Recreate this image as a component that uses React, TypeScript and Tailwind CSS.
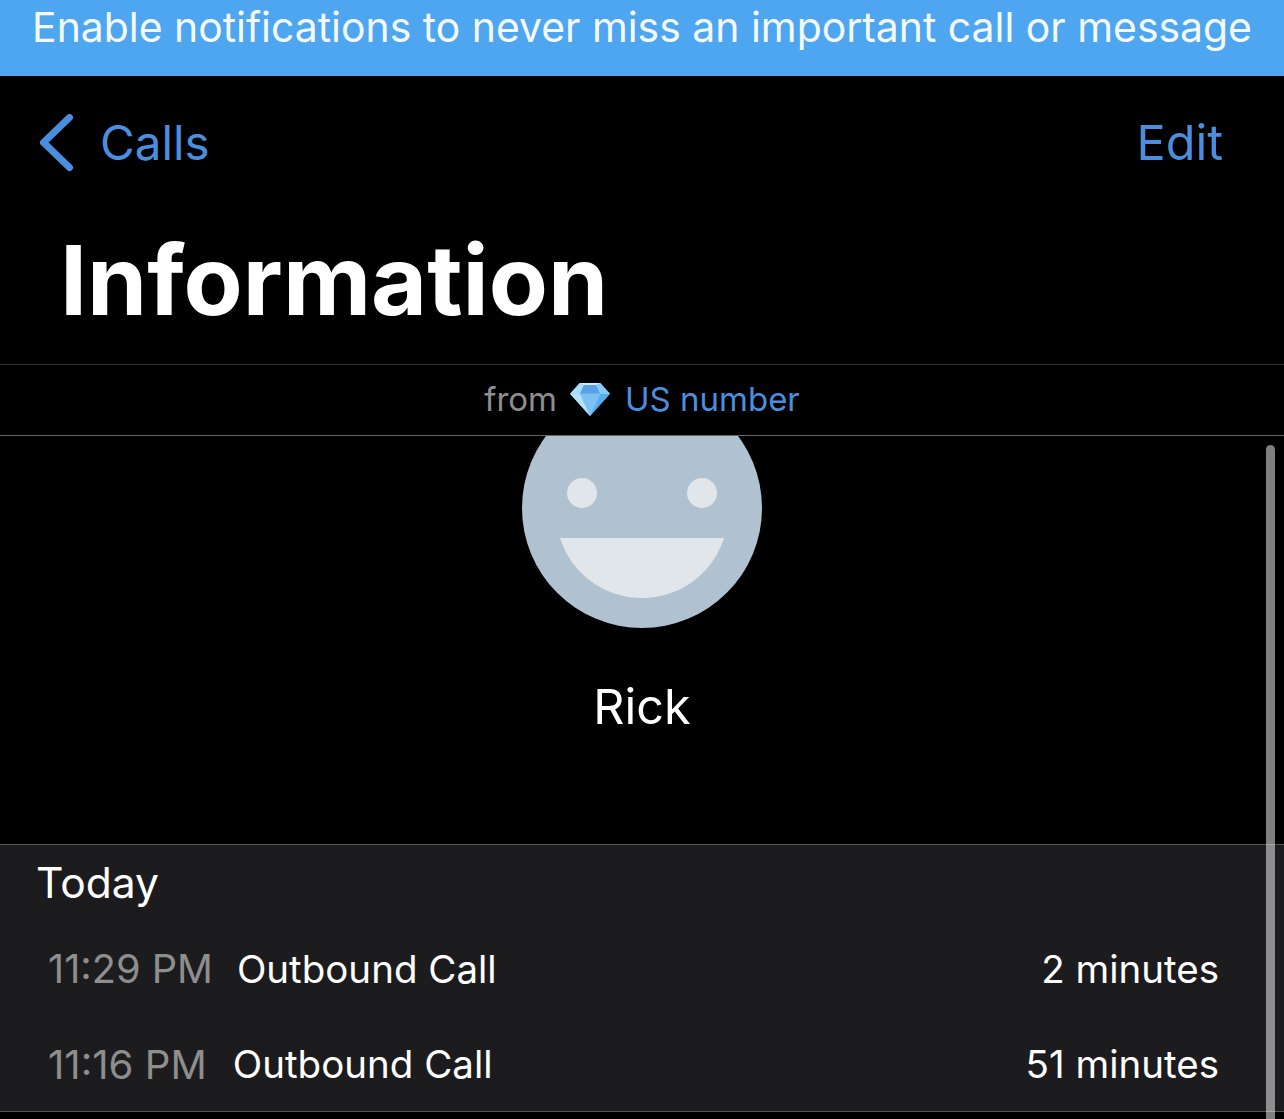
export default function App() {
  const font = { fontFamily: "Inter, sans-serif" };
  return (
    <div style={font} className="relative w-[1284px] h-[1119px] overflow-hidden bg-black text-white">
      <div className="h-[76px] bg-[#4da6ef] flex justify-center pt-[5px]">
        <span className="text-[40.9px] leading-[44px] whitespace-nowrap text-[#f4f9fe]">Enable notifications to never miss an important call or message</span>
      </div>
      <div className="h-[289px] border-b border-[#333333]">
        <div className="flex items-center justify-between pl-[39px] pr-[61px] pt-[38px] h-[96px]">
          <div className="flex items-center gap-[24px]">
            <svg width="37" height="58" viewBox="0 0 37 58" fill="none">
              <path d="M30.500 3.500 L4.500 28.500 L30.500 53.500" stroke="#4a8fdf" strokeWidth="7" strokeLinecap="round" strokeLinejoin="round" />
            </svg>
            <span className="text-[47.6px] leading-[56px] text-[#4a8fdf]">Calls</span>
          </div>
          <span className="text-[48.500px] leading-[56px] text-[#4a8fdf]">Edit</span>
        </div>
        <h1 className="pl-[60px] pt-[52px] text-[96.600px] leading-[112px] font-bold">Information</h1>
      </div>
      <div className="h-[71px] border-b border-[#666666] flex items-center justify-center pb-[3px]">
        <span className="text-[33px] leading-[38px] text-[#8e8e8e]">from</span>
        <svg className="ml-[13px] mr-[15px]" width="40" height="34" viewBox="0 0 41 35">
          <polygon points="10,1 31,1 41,12 20.500,35 0,12" fill="#8fd2f8" />
          <polygon points="10,1 31,1 27,3 14,3" fill="#cdeefe" />
          <polygon points="14,3 27,3 31,12 10,12" fill="#5a9fe8" />
          <polygon points="10,12 31,12 20.500,35" fill="#7cc0f5" />
          <polygon points="0,12 10,12 20.500,35" fill="#b4e2fb" />
          <polygon points="31,12 41,12 20.500,35" fill="#57aeee" />
          <polygon points="10,1 14,3 10,12 0,12" fill="#a9def9" />
          <polygon points="31,1 27,3 31,12 41,12" fill="#86ccf7" />
        </svg>
        <span className="text-[33px] leading-[38px] text-[#4a8fdf]">US number</span>
      </div>
      <div className="h-[408px] flex flex-col items-center overflow-hidden">
        <svg className="shrink-0 mt-[-48px] ml-[-1px]" width="240" height="240" viewBox="0 0 240 240">
          <circle cx="120" cy="120" r="120" fill="#b0c2d0" />
          <circle cx="60" cy="105" r="15" fill="#e1e6ea" />
          <circle cx="180" cy="105" r="15" fill="#e1e6ea" />
          <path d="M38 150 H202 A86 86 0 0 1 38 150 Z" fill="#e1e6ea" />
        </svg>
        <span className="mt-[49px] text-[48.500px] leading-[60px]">Rick</span>
      </div>
      <div className="h-[268px] bg-[#1c1c1e] border-y border-[#545456]">
        <div className="pl-[36px] pt-[12px] text-[42.600px] leading-[52px]">Today</div>
        <div className="flex items-center justify-between pl-[48px] pr-[65px] mt-[36px] h-[50px]">
          <div className="flex items-center gap-[24px]">
            <span className="text-[39.700px] text-[#8e8e8e]">11:29 PM</span>
            <span className="text-[38.500px]">Outbound Call</span>
          </div>
          <span className="text-[38.500px]">2 minutes</span>
        </div>
        <div className="flex items-center justify-between pl-[48px] pr-[65px] mt-[45px] h-[50px]">
          <div className="flex items-center gap-[26px]">
            <span className="text-[40.200px] text-[#8e8e8e]">11:16 PM</span>
            <span className="text-[38.500px]">Outbound Call</span>
          </div>
          <span className="text-[38.500px]">51 minutes</span>
        </div>
      </div>
      <div className="absolute left-[1266px] top-[445px] bottom-0 w-[9px] rounded-t-full bg-white/50"></div>
    </div>
  );
}
